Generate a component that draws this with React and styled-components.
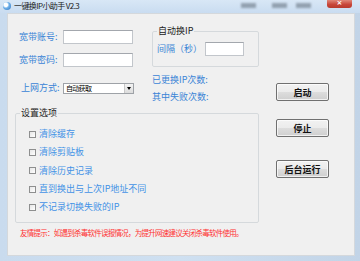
import React from "react";
import styled, { createGlobalStyle } from "styled-components";

const Global = createGlobalStyle`
  html, body { margin: 0; padding: 0; background: #fff; }
  * { box-sizing: border-box; }
`;

const Window = styled.div`
  width: 360px;
  height: 261px;
  background: linear-gradient(90deg, #c9dbee 0%, #cfe0f1 50%, #c2d4e7 100%);
  display: flex;
  flex-direction: column;
  font-family: "Noto Sans CJK SC", "Noto Sans", sans-serif;
  overflow: hidden;
`;

const TitleBar = styled.div`
  height: 13px;
  display: flex;
  align-items: flex-start;
  padding-left: 3px;
  background: linear-gradient(180deg, #d8e7f6 0%, #c9dcf0 100%);
`;

const AppIcon = styled.div`
  width: 8px;
  height: 8px;
  margin-top: 2px;
  border-radius: 50%;
  background: radial-gradient(circle at 35% 35%, #ffffff 0 25%, #6fb0e8 45%, #2b73c0 100%);
`;

const Title = styled.span`
  width: 64px;
  margin-left: 3px;
  font-size: 8px;
  letter-spacing: -0.6px;
  line-height: 12px;
  color: #1a1a1a;
  white-space: nowrap;
`;

const Blur = styled.div`
  width: ${(p) => p.$w}px;
  height: 5px;
  margin-top: 3px;
  margin-left: ${(p) => p.$ml}px;
  background: rgba(70, 82, 96, 0.45);
  filter: blur(1.2px);
`;

const Close = styled.div`
  width: 25px;
  height: 8px;
  margin-left: 16px;
  border-radius: 0 0 3px 3px;
  background: linear-gradient(180deg, #e0887a 0%, #c8473a 55%, #b83a2d 100%);
  color: #fff;
  font-size: 7px;
  line-height: 7px;
  text-align: center;
  font-family: "DejaVu Sans", sans-serif;
  font-weight: bold;
`;

const Client = styled.div`
  margin: 0 5px 5px 7px;
  flex: 1;
  background: #f0f0f0;
  border: 1px solid #d4d8dc;
  padding: 12px 0 0 7px;
  display: flex;
  flex-direction: column;
`;

const Main = styled.div`
  display: flex;
  gap: 17px;
`;

const Left = styled.div`
  width: 244px;
  display: flex;
  flex-direction: column;
`;

const Top = styled.div`
  height: 82px;
  display: flex;
`;

const Fields = styled.div`
  width: 137px;
  padding: 4px 0 0 4px;
  display: flex;
  flex-direction: column;
`;

const FieldRow = styled.div`
  display: flex;
  align-items: center;
  margin-top: ${(p) => p.$mt || 0}px;
`;

const Label = styled.span`
  width: ${(p) => p.$w || 44}px;
  padding-left: ${(p) => p.$pl || 0}px;
  font-size: 9px;
  line-height: 12px;
  color: #3a84d6;
  white-space: nowrap;
`;

const TextInput = styled.div`
  width: ${(p) => p.$w || 70}px;
  height: 14px;
  background: #fff;
  border: 1px solid #c2c6cb;
  border-top-color: #a3a7ad;
`;

const Select = styled.div`
  width: 71px;
  height: 11px;
  background: #fff;
  border: 1px solid #9ea2a7;
  display: flex;
  align-items: center;
  color: #000;
  padding-left: 2px;
  overflow: hidden;
`;

const SelectText = styled.span`
  flex: 1;
  font-size: 7px;
  letter-spacing: -0.7px;
  line-height: 9px;
  white-space: nowrap;
`;

const Arrow = styled.div`
  width: 9px;
  height: 9px;
  display: flex;
  align-items: center;
  justify-content: center;
  background: linear-gradient(180deg, #f4f4f4, #dcdcdc);
  border-left: 1px solid #c8c8c8;
  &::after {
    content: "";
    border-left: 2.5px solid transparent;
    border-right: 2.5px solid transparent;
    border-top: 3px solid #000;
  }
`;

const Side = styled.div`
  width: 107px;
  display: flex;
  flex-direction: column;
`;

const Group = styled.fieldset`
  margin: 0;
  padding: ${(p) => p.$pad};
  border: 1px solid #d5d9dc;
  border-radius: 2px;
  min-width: 0;
`;

const Legend = styled.legend`
  padding: 0 1px;
  font-size: 9px;
  line-height: 10px;
  color: #222;
`;

const Stat = styled.div`
  font-size: 9px;
  line-height: 12px;
  color: #3a84d6;
  margin-top: ${(p) => p.$mt}px;
`;

const CheckRow = styled.div`
  height: 18.3px;
  display: flex;
  align-items: center;
  margin-left: 9px;
  gap: 3px;
`;

const Box = styled.span`
  width: 7px;
  height: 7px;
  border: 1px solid #8e8f8f;
  background: linear-gradient(135deg, #e6e6e6, #ffffff);
`;

const CheckText = styled.span`
  font-size: 9px;
  line-height: 12px;
  color: #4392e6;
  white-space: nowrap;
`;

const Buttons = styled.div`
  display: flex;
  flex-direction: column;
  padding-top: 57px;
`;

const Button = styled.div`
  width: 53px;
  height: 18px;
  margin-top: ${(p) => p.$mt || 0}px;
  border: 1px solid #707070;
  border-radius: 2px;
  background: linear-gradient(180deg, #f2f2f2 0%, #ebebeb 50%, #dddddd 51%, #cfcfcf 100%);
  box-shadow: inset 0 0 0 1px rgba(255, 255, 255, 0.7);
  display: flex;
  align-items: center;
  justify-content: center;
  font-size: 9px;
  font-weight: bold;
  color: #111;
`;

const Tip = styled.div`
  margin: 5px 0 0 5px;
  font-size: 7.5px;
  letter-spacing: -0.75px;
  line-height: 10px;
  color: #ff3030;
  white-space: nowrap;
`;

const options = [
  "清除缓存",
  "清除剪贴板",
  "清除历史记录",
  "直到换出与上次IP地址不同",
  "不记录切换失败的IP",
];

export default function App() {
  return (
    <>
      <Global />
      <Window>
        <TitleBar>
          <AppIcon />
          <Title>一键换IP小助手 V2.3</Title>
          <Blur $w={15} $ml={163} />
          <Blur $w={15} $ml={16} />
          <Blur $w={15} $ml={9} />
          <Close>×</Close>
        </TitleBar>
        <Client>
          <Main>
            <Left>
              <Top>
                <Fields>
                  <FieldRow>
                    <Label>宽带账号:</Label>
                    <TextInput />
                  </FieldRow>
                  <FieldRow $mt={9}>
                    <Label>宽带密码:</Label>
                    <TextInput />
                  </FieldRow>
                  <FieldRow $mt={15}>
                    <Label $pl={2}>上网方式:</Label>
                    <Select>
                      <SelectText>自动获取</SelectText>
                      <Arrow />
                    </Select>
                  </FieldRow>
                </Fields>
                <Side>
                  <Group $pad="6px 3px 10px 4px">
                    <Legend>自动换IP</Legend>
                    <FieldRow>
                      <Label $w={48}>间隔（秒）</Label>
                      <TextInput $w={39} />
                    </FieldRow>
                  </Group>
                  <Stat $mt={7}>已更换IP次数:</Stat>
                  <Stat $mt={5}>其中失败次数:</Stat>
                </Side>
              </Top>
              <Group $pad="7px 4px 6px 4px">
                <Legend>设置选项</Legend>
                {options.map((o) => (
                  <CheckRow key={o}>
                    <Box />
                    <CheckText>{o}</CheckText>
                  </CheckRow>
                ))}
              </Group>
            </Left>
            <Buttons>
              <Button>启动</Button>
              <Button $mt={18}>停止</Button>
              <Button $mt={23}>后台运行</Button>
            </Buttons>
          </Main>
          <Tip>友情提示：如遇到杀毒软件误报情况，为提升网速建议关闭杀毒软件使用。</Tip>
        </Client>
      </Window>
    </>
  );
}
